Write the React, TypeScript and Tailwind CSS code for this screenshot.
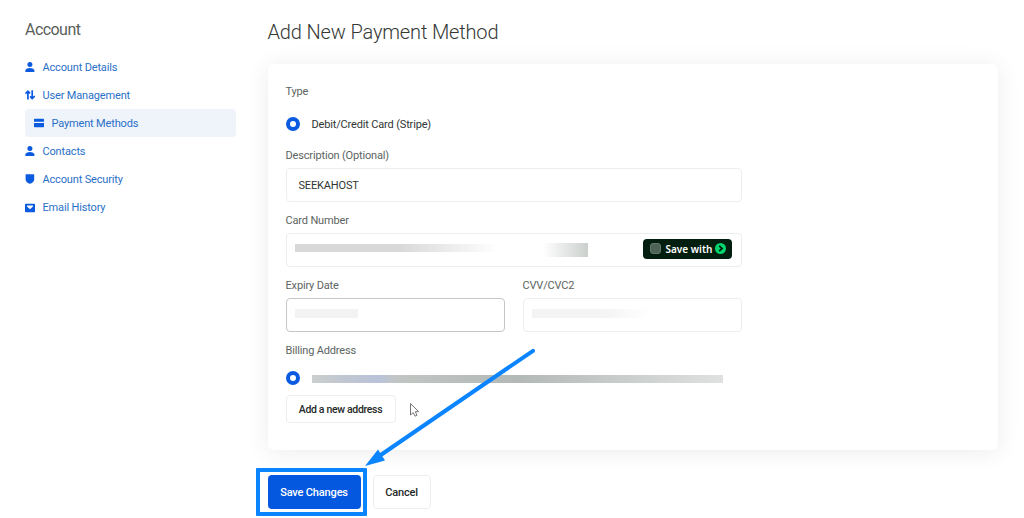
import type { ReactNode } from 'react'

const UserIcon = () => (
  <svg viewBox="0 0 10 10" className="w-[10px] h-[10px]" fill="#0b5be0">
    <ellipse cx="4.9" cy="2.5" rx="2.5" ry="2.5" />
    <path d="M0.4 9.9V8.6C0.4 6.9 2.4 6 4.9 6S9.4 6.9 9.4 8.6V9.9Z" />
  </svg>
)

const ArrowsIcon = () => (
  <svg viewBox="0 0 10 10" className="w-[10px] h-[10px]" fill="none" stroke="#0b5be0" strokeWidth="1.7">
    <path d="M2.9 9.4V1.2M0.4 3.7L2.9 1.2L5 3.3M7.2 0.3V8.6M5.1 6.3L7.2 8.5L9.8 6" />
  </svg>
)

const CardIcon = () => (
  <svg viewBox="0 0 10 10" className="w-[10px] h-[10px]" fill="#0b5be0">
    <path d="M0.8 0.8H9.2Q10 0.8 10 1.6V3.8H0V1.6Q0 0.8 0.8 0.8ZM0 5H10V8.4Q10 9.2 9.2 9.2H0.8Q0 9.2 0 8.4Z" />
  </svg>
)

const ShieldIcon = () => (
  <svg viewBox="0 0 10 10" className="w-[10px] h-[10px]" fill="#0b5be0">
    <path d="M1.2 0.2H8.6Q9.2 0.2 9.2 0.8V5.4C9.2 7.6 7 9 4.9 9.8C2.8 9 0.6 7.6 0.6 5.4V0.8Q0.6 0.2 1.2 0.2Z" />
  </svg>
)

const MailIcon = () => (
  <svg viewBox="0 0 10 10" className="w-[10px] h-[10px]">
    <rect x="0" y="0.8" width="10" height="8.4" rx="0.8" fill="#0b5be0" />
    <path d="M2 2.4H8V3.6L5 6.3L2 3.6Z" fill="#fff" />
  </svg>
)

const links = [
  { label: 'Account Details', icon: <UserIcon /> },
  { label: 'User Management', icon: <ArrowsIcon /> },
  { label: 'Payment Methods', icon: <CardIcon />, active: true },
  { label: 'Contacts', icon: <UserIcon /> },
  { label: 'Account Security', icon: <ShieldIcon /> },
  { label: 'Email History', icon: <MailIcon /> },
]

function Label({ children }: { children: ReactNode }) {
  return <div className="h-4 leading-[17px] text-[#5c6461]">{children}</div>
}

function Radio() {
  return <span className="w-[14px] h-[14px] rounded-full border-4 border-[#0b5be0] bg-white shrink-0" />
}

export default function App() {
  return (
    <div className="relative flex w-[1024px] h-[518px] overflow-hidden bg-white font-[Roboto,sans-serif] text-[11px] tracking-[-0.16px] text-[#303633]">
      <aside className="w-[211px] ml-[25px] pt-5 shrink-0">
        <h2 className="text-[16px] leading-5 tracking-[-0.55px] text-[#5a5f5b]">Account</h2>
        <nav className="mt-[13px]">
          {links.map((link) => (
            <a
              key={link.label}
              href="#"
              className={
                'flex items-center gap-[7.5px] h-[28.1px] rounded-sm text-[#2a70c8] ' +
                (link.active ? 'bg-[#eff4fa] pl-[9px]' : '')
              }
            >
              {link.icon}
              <span className="pt-[2px]">{link.label}</span>
            </a>
          ))}
        </nav>
      </aside>

      <main className="ml-[31.5px] pt-5 w-[730px] shrink-0">
        <h1 className="text-[20px] leading-[25px] font-light tracking-[-0.15px] text-[#333835]">
          Add New Payment Method
        </h1>

        <section className="mt-[19px] h-[386px] rounded-md bg-white shadow-[0_2px_24px_rgba(0,0,0,0.08)] pl-[18px] pt-[19px]">
          <div className="w-[456px]">
            <Label>Type</Label>
            <div className="flex items-center gap-3 h-[14px] mt-[18.4px]">
              <Radio />
              <span className="pt-px">Debit/Credit Card (Stripe)</span>
            </div>

            <div className="mt-4">
              <Label>Description (Optional)</Label>
              <div className="mt-[5px] h-[34px] flex items-center px-3 pt-px border border-[#eceeee] rounded">
                SEEKAHOST
              </div>
            </div>

            <div className="mt-[10px]">
              <Label>Card Number</Label>
              <div className="mt-[5px] h-[34px] flex items-center pl-2 pr-[9px] border border-[#eceeee] rounded">
                <span className="w-[204px] h-2 mb-1 bg-linear-to-r from-[#d8d8d8] from-50% to-white" />
                <span className="ml-[44px] w-[45px] h-[14px] bg-linear-to-r from-white to-[#cbd0cd]" />
                <span className="ml-auto flex items-center w-[89px] h-5 pl-[7px] mb-[3px] rounded bg-[#011e0f] text-white">
                  <span className="w-[11px] h-[11px] rounded-[3px] bg-[#4c6356] border border-[#627669]" />
                  <span className="ml-[5px] pt-px font-['Noto_Sans',sans-serif] font-semibold text-[10px] tracking-normal">
                    Save with
                  </span>
                  <svg viewBox="0 0 10 10" className="ml-[3px] w-[11px] h-[11px]">
                    <circle cx="5" cy="5" r="5" fill="#00d66f" />
                    <path d="M3.8 2.6L6.4 5L3.8 7.4" fill="none" stroke="#011e0f" strokeWidth="1.6" />
                  </svg>
                </span>
              </div>
            </div>

            <div className="flex gap-[18px] mt-[10px]">
              <div className="w-[219px]">
                <Label>Expiry Date</Label>
                <div className="mt-[4.2px] h-[34px] pt-[10px] pl-2 border border-[#c4c6c6] rounded">
                  <div className="w-[63px] h-[9px] bg-[#f3f3f3]" />
                </div>
              </div>
              <div className="w-[219px]">
                <Label>CVV/CVC2</Label>
                <div className="mt-[4.2px] h-[34px] pt-[10px] pl-2 border border-[#eceeee] rounded">
                  <div className="w-[118px] h-[9px] bg-linear-to-r from-[#f4f4f4] from-60% to-white" />
                </div>
              </div>
            </div>

            <div className="mt-[10px]">
              <Label>Billing Address</Label>
              <div className="flex items-center gap-3 h-[14px] mt-[13.8px]">
                <Radio />
                <span className="w-[411px] h-2 mt-px bg-linear-to-r from-[#cbcfcd] via-[#b3b9b6] via-50% to-[#dfe1e0]">
                  <span className="block w-[84px] h-full bg-linear-to-r from-transparent via-[#b9c2da] via-80% to-transparent" />
                </span>
              </div>
              <button className="mt-[10px] h-7 w-[110px] border border-[#eceeee] rounded font-medium text-[10.5px] tracking-[-0.33px] text-[#252a28]">
                Add a new address
              </button>
            </div>
          </div>
        </section>

        <div className="flex gap-3 mt-[25px]">
          <button className="w-[93px] h-[34px] pt-[2px] rounded bg-[#0458e0] text-white font-medium">Save Changes</button>
          <button className="w-[58px] h-[34px] pt-[2px] rounded border border-[#eceeee] font-medium text-[#252a28]">
            Cancel
          </button>
        </div>
      </main>

      {/* highlight frame, arrow and mouse pointer over the form */}
      <div className="absolute left-[256px] top-[468px] w-[111px] h-[48px] border-4 border-[#0a84ff] rounded-[1px]" />
      <svg className="absolute inset-0" width="1024" height="518">
        <path d="M533 350.8L380 455.5" stroke="#0a84ff" strokeWidth="4" strokeLinecap="round" />
        <path d="M365 466L378 449.5L385 460.5Z" fill="#0a84ff" />
        <path
          d="M410.5 403.5V415L413.2 412.6L415 416.2L417 415.2L415.3 411.7H418.6Z"
          fill="#fff"
          stroke="#666"
          strokeWidth="0.9"
        />
      </svg>
    </div>
  )
}
